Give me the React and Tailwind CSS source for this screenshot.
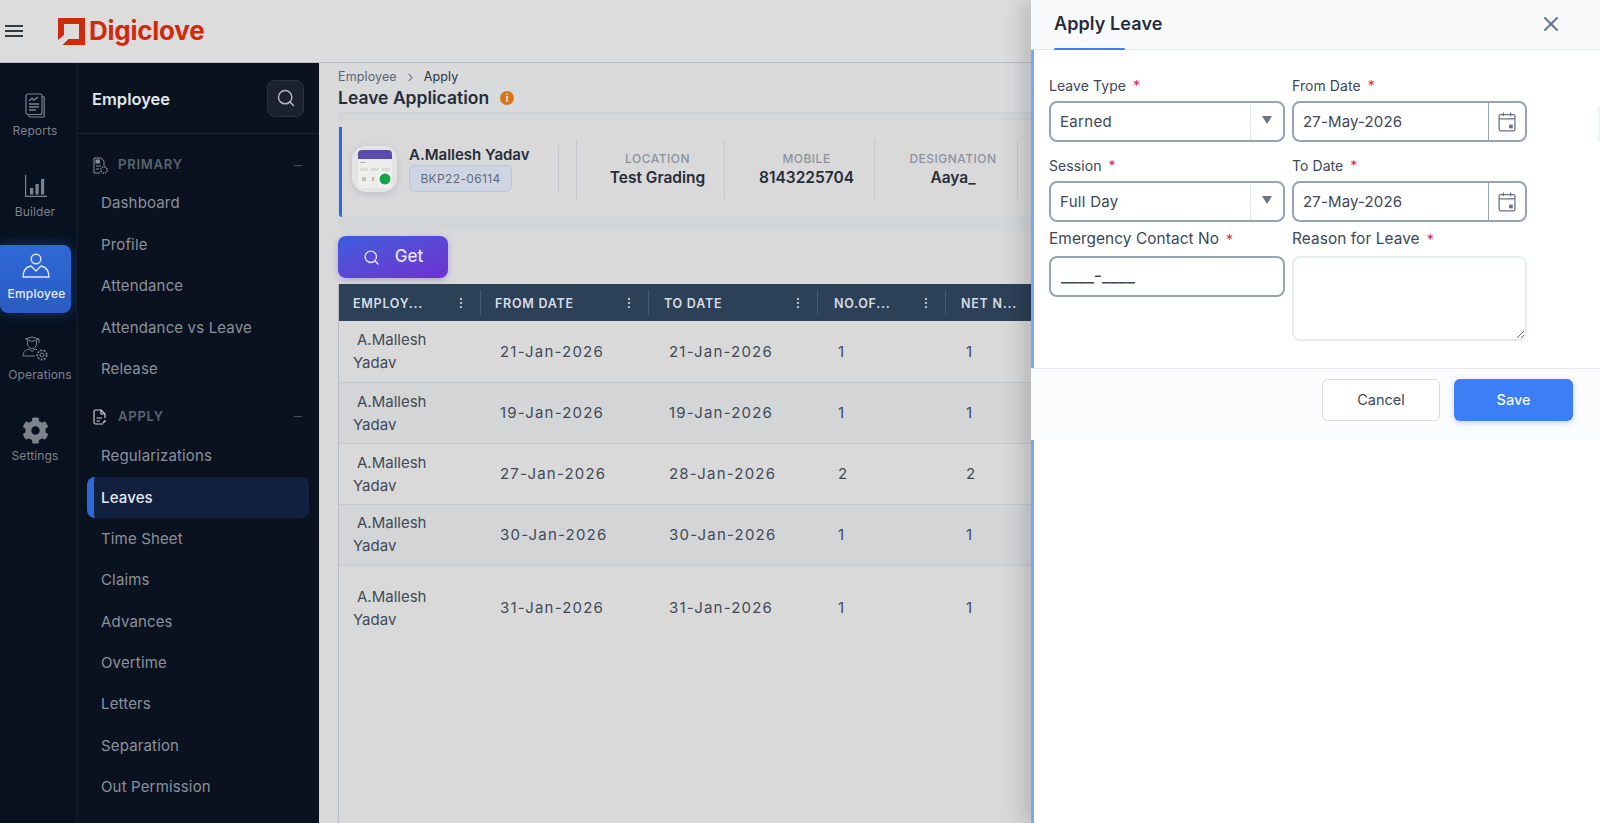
import React from 'react';
import { ChevronRight, EllipsisVertical, Search, X } from 'lucide-react';
import { FaCog } from 'react-icons/fa';

const primaryItems = ['Dashboard', 'Profile', 'Attendance', 'Attendance vs Leave', 'Release'];
const applyItems = ['Regularizations', 'Leaves', 'Time Sheet', 'Claims', 'Advances', 'Overtime', 'Letters', 'Separation', 'Out Permission'];

const columns = [
  { label: 'EMPLOY...', width: 'w-[142px]', pad: 'pl-[14px]' },
  { label: 'FROM DATE', width: 'w-[168px]', pad: 'pl-[14px]' },
  { label: 'TO DATE', width: 'w-[169px]', pad: 'pl-[15px]' },
  { label: 'NO.OF...', width: 'w-[128px]', pad: 'pl-[16px]' },
  { label: 'NET N...', width: 'w-[128px]', pad: 'pl-[15px]' },
];

const rows = [
  { from: '21-Jan-2026', to: '21-Jan-2026', days: 1, net: 1, height: 'h-[61px]', bg: 'bg-[#d9d9d9]', border: 'border-b border-[#c5c9ce]' },
  { from: '19-Jan-2026', to: '19-Jan-2026', days: 1, net: 1, height: 'h-[61px]', bg: 'bg-[#d3d5d7]', border: 'border-b border-[#c5c9ce]' },
  { from: '27-Jan-2026', to: '28-Jan-2026', days: 2, net: 2, height: 'h-[61px]', bg: 'bg-[#d9d9d9]', border: 'border-b border-[#c5c9ce]' },
  { from: '30-Jan-2026', to: '30-Jan-2026', days: 1, net: 1, height: 'h-[61px]', bg: 'bg-[#d3d5d7]', border: 'border-b-2 border-[#cbced2]' },
  { from: '31-Jan-2026', to: '31-Jan-2026', days: 1, net: 1, height: 'h-[84px]', bg: 'bg-[#d9d9d9]', border: '' },
];

function ReportsIcon() {
  return (
    <svg width="20" height="25" viewBox="0 0 20 25" fill="none" stroke="currentColor" strokeWidth="1.2">
      <path d="M17 3.500h1.200a1 1 0 0 1 1 1V23a1 1 0 0 1-1 1H5a1 1 0 0 1-1-1v-1.500" />
      <rect x="1" y="1" width="16" height="20.500" rx="2" />
      <path d="M4 8l3-2.500 2 1.500 4-3" strokeWidth="1.400" />
      <path d="M4 11h10M4 14h10M4 17h7" strokeWidth="1.400" />
    </svg>
  );
}

function BuilderIcon() {
  return (
    <svg width="23" height="23" viewBox="0 0 23 23" fill="currentColor">
      <path d="M1 0h1.200v20.800H23V22H1z" />
      <rect x="6" y="13" width="3.200" height="6.500" />
      <rect x="11.500" y="9" width="3.200" height="10.500" />
      <rect x="17" y="4" width="3.200" height="15.500" />
    </svg>
  );
}

function EmployeeIcon() {
  return (
    <svg width="28" height="25" viewBox="0 0 28 25" fill="none" stroke="currentColor" strokeWidth="1.400">
      <circle cx="14" cy="6" r="4.800" />
      <path d="M1 24c0-7 3-10 8-11l5 5 5-5c5 1 8 4 8 11z" strokeLinejoin="round" />
    </svg>
  );
}

function OperationsIcon() {
  return (
    <svg width="26" height="26" viewBox="0 0 26 26" fill="none" stroke="currentColor" strokeWidth="1">
      <path d="M3.500 3L10 1l7 2-7 2.500z" />
      <path d="M5.500 4.500V8a4.500 4.500 0 0 0 9 0V4.500M17 3v4" />
      <path d="M1 20c0-4 2.500-6 6-7l3 2.500 3-2.500 2 .7M1 20h12" strokeLinejoin="round" />
      <circle cx="20" cy="19" r="2" />
      <circle cx="20" cy="19" r="4.700" strokeWidth="1.700" strokeDasharray="2 1.300" />
    </svg>
  );
}

function PrimaryIcon() {
  return (
    <svg width="15" height="17" viewBox="0 0 15 17" fill="none" stroke="#8a909a" strokeWidth="1">
      <path d="M7 16H1V1h7l3 3v5" />
      <rect x="3" y="3" width="3.500" height="3" fill="#8a909a" />
      <path d="M3 9h5M3 12h3" />
      <circle cx="11" cy="13" r="3.200" strokeWidth="1.400" strokeDasharray="1.500 1" />
    </svg>
  );
}

function ApplyIcon() {
  return (
    <svg width="14" height="16" viewBox="0 0 14 16" fill="none" stroke="#c9ccd2" strokeWidth="1.200">
      <path d="M12 9V5L8 1H2.500A1.500 1.500 0 0 0 1 2.500v11A1.500 1.500 0 0 0 2.500 15H10" strokeLinejoin="round" />
      <path d="M8 1v4h4M3.500 9H9M3.500 12H7" />
      <path d="M10 14l2.500-2.500" strokeWidth="1.600" />
    </svg>
  );
}

function CalendarIcon() {
  return (
    <svg width="18" height="20" viewBox="0 0 17 19" fill="none" stroke="#64748b" strokeWidth="1.200">
      <rect x="1" y="2.500" width="15" height="15.500" rx="1.500" />
      <path d="M1 6.500h15M5 .5v3.500M12 .5v3.500" />
      <rect x="10.500" y="12" width="3.500" height="3.500" fill="#64748b" stroke="none" />
    </svg>
  );
}

function AvatarArt() {
  return (
    <svg width="34" height="38" viewBox="0 0 34 38">
      <rect width="34" height="38" rx="4" fill="#eeeeec" />
      <path d="M0 9V4a4 4 0 0 1 4-4h26a4 4 0 0 1 4 4v5z" fill="#5b4ab0" />
      <rect x="2" y="12" width="6" height="1" fill="#b5b5b5" />
      <rect x="2" y="18" width="8" height="3" fill="#dbdbd6" />
      <rect x="13" y="18" width="8" height="3" fill="#dbdbd6" />
      <rect x="24" y="18" width="8" height="3" fill="#dbdbd6" />
      <rect x="4" y="27" width="4" height="4" fill="#c5c1bb" />
      <rect x="14" y="27" width="2" height="4" fill="#dfa59c" />
      <circle cx="27" cy="29" r="7" fill="#f6f6f6" />
      <circle cx="27" cy="29" r="5.500" fill="#16a34a" />
    </svg>
  );
}

function NavItem({ label, active }) {
  if (active) {
    return (
      <div className="ml-[10px] mr-[10px] flex h-[41px] items-center rounded-lg border-l-[7px] border-[#3069d6] bg-[#12203f] pl-[7px] text-[15px] font-medium tracking-[0.01em] text-[#e8ebf0]">
        {label}
      </div>
    );
  }
  return <div className="flex h-[41.400px] items-center pl-6 text-[15px] tracking-[0.01em] text-[#8b919b]">{label}</div>;
}

function SectionTitle({ icon, label }) {
  return (
    <div className="flex h-[36px] items-center pl-4 pr-[17px]">
      <span className="flex w-[25px]">{icon}</span>
      <span className="text-[13px] font-semibold tracking-[0.06em] text-[#5c636f]">{label}</span>
      <span className="ml-auto h-[1px] w-2 bg-[#4b525e]" />
    </div>
  );
}

function RailItem({ icon, label, active, labelClass = '' }) {
  if (active) {
    return (
      <div className="flex h-[68px] w-[71px] flex-col items-center rounded-r-lg rounded-bl-lg bg-gradient-to-b from-[#2f69d6] to-[#2a5cc4] pt-[8px] text-[#dfe8fa] shadow-[0_0_14px_rgba(47,105,214,0.45)]">
        {icon}
        <span className="ml-[2px] mt-[7px] text-[12px] font-medium tracking-[0.02em] text-[#e6edfb]">{label}</span>
      </div>
    );
  }
  return (
    <div className="flex w-[70px] flex-col items-center text-[#7d838d]">
      <span className="flex h-[30px] items-center">{icon}</span>
      <span className={`mt-[2px] text-[12px] tracking-[0.01em] ${labelClass}`}>{label}</span>
    </div>
  );
}

function StatBlock({ label, value, width }) {
  return (
    <div className={`flex h-[60px] flex-col items-center justify-center border-r border-[#c4c7cb] pl-[14px] pt-[3px] ${width}`}>
      <span className="text-[12px] font-medium tracking-[0.04em] text-[#8c93a0]">{label}</span>
      <span className="-mt-[2px] text-[15.500px] font-semibold text-[#252d3a]">{value}</span>
    </div>
  );
}

function FieldLabel({ text, large }) {
  return (
    <label className={`flex h-[22px] items-center tracking-[0.005em] text-[#3d4756] ${large ? 'text-[15.400px]' : 'text-[14px]'}`}>
      {text}
      <span className="ml-[7px] text-[14px] text-[#e11d48]">*</span>
    </label>
  );
}

function SelectField({ value }) {
  return (
    <div className="flex h-[41px] items-center rounded-lg border-2 border-[#97a3b6] bg-white text-[15px] tracking-[0.02em] text-[#3d4756]">
      <span className="flex-1 pl-[9px] pt-[2px]">{value}</span>
      <span className="flex h-full w-[33px] items-center justify-center border-l border-[#e2e8f0] pb-1">
        <span className="h-0 w-0 border-x-[5px] border-t-[8px] border-x-transparent border-t-[#64748b]" />
      </span>
    </div>
  );
}

function DateField({ value }) {
  return (
    <div className="flex h-[41px] items-center rounded-lg border-2 border-[#97a3b6] bg-white text-[15px] tracking-[0.01em] text-[#3d4756]">
      <span className="flex-1 pl-[9px] pt-[2px]">{value}</span>
      <span className="flex h-full w-[37px] items-center justify-center border-l border-[#97a3b6]">
        <CalendarIcon />
      </span>
    </div>
  );
}

export default function App() {
  return (
    <div className="relative h-[823px] w-[1600px] overflow-hidden bg-[#d9d9d9] font-['Inter',sans-serif]">
      {/* Top bar */}
      <header className="flex h-[63px] items-center border-b border-[#b9bcc0] bg-[#dcdcdc]">
        <div className="ml-[5px] flex w-[18px] flex-col gap-[3px]">
          <span className="h-[2px] bg-[#333a40]" />
          <span className="h-[2px] bg-[#333a40]" />
          <span className="h-[2px] bg-[#333a40]" />
        </div>
        <svg className="ml-[35px]" width="27" height="27" viewBox="0 0 27 27" fill="#cf2a0e">
          <path d="M0 0H27V27H4.500L10.500 21H21V6H6V17L0 22Z" />
        </svg>
        <span className="ml-[4px] text-[26px] font-bold leading-none tracking-[-0.01em] text-[#cf2a0e]">Digiclove</span>
      </header>

      <div className="flex h-[760px]">
        {/* Icon rail */}
        <aside className="flex w-[77px] shrink-0 flex-col border-r border-[#141d2b] bg-[#07111f]">
          <div className="pt-[27px]">
            <RailItem icon={<ReportsIcon />} label="Reports" />
          </div>
          <div className="mt-[31px]">
            <RailItem icon={<BuilderIcon />} label="Builder" />
          </div>
          <div className="mt-[24px]">
            <RailItem active icon={<EmployeeIcon />} label="Employee" />
          </div>
          <div className="mt-[21px]">
            <RailItem icon={<OperationsIcon />} label="Operations" labelClass="translate-x-[5px]" />
          </div>
          <div className="mt-[31px]">
            <RailItem icon={<FaCog size={27} />} label="Settings" />
          </div>
        </aside>

        {/* Section nav */}
        <nav className="w-[242px] shrink-0 bg-[#0a1220]">
          <div className="flex h-[71px] items-center justify-between border-b border-[#1e2633] pl-[15px] pr-[15px]">
            <span className="pt-[2px] text-[16.500px] font-semibold text-[#e2e5ea]">Employee</span>
            <span className="flex h-[37px] w-[37px] items-center justify-center rounded-lg border border-[#2a3341] bg-[#1a2230]">
              <Search size={20} strokeWidth={1.750} className="text-[#b4b8bf]" />
            </span>
          </div>
          <div className="pt-[13px]">
            <SectionTitle icon={<PrimaryIcon />} label="PRIMARY" />
            {primaryItems.map((item) => (
              <NavItem key={item} label={item} />
            ))}
            <div className="mt-[9px]">
              <SectionTitle icon={<ApplyIcon />} label="APPLY" />
            </div>
            <div className="mt-[1px]">
              {applyItems.map((item) => (
                <NavItem key={item} label={item} active={item === 'Leaves'} />
              ))}
            </div>
          </div>
        </nav>

        {/* Page content */}
        <main className="flex min-w-0 flex-1 flex-col pl-[19px]">
          <div className="h-[51px] shrink-0 border-b-2 border-[#cfd2d6] bg-[#d8dadb] pt-[5px]">
            <div className="flex items-center pt-[1px] text-[12.500px] leading-4 tracking-[0.01em] text-[#5e6673]">
              Employee
              <ChevronRight size={13} className="mx-[7px] text-[#7b828e]" />
              <span className="text-[#2d3542]">Apply</span>
            </div>
            <div className="mt-[1px] flex items-center text-[17.500px] font-semibold leading-6 text-[#252d3a]">
              Leave Application
              <span className="ml-[11px] flex h-[14px] w-[14px] items-center justify-center rounded-full bg-[#d97716] text-[10px] font-bold leading-none text-[#e9e5dc]">i</span>
            </div>
          </div>

          {/* Employee summary */}
          <div className="bg-[#d4d6d8] pb-[13px] pt-[5px]">
            <div className="flex h-[99px] items-center rounded-lg border border-[#cfd2d6] bg-[#d9d9d9]">
              <div className="h-[90px] w-[3px] self-end rounded-bl bg-[#2f69d6]" />
              <div className="ml-[10px] flex h-[46px] w-[45px] items-center justify-center rounded-[14px] bg-[#e4e4e4] shadow-[0_2px_6px_rgba(90,90,130,0.2)]">
                <AvatarArt />
              </div>
              <div className="ml-[12px] flex h-[47px] w-[150px] flex-col justify-between border-r border-[#c4c7cb]">
                <span className="text-[15px] font-semibold leading-[20px] text-[#252d3a]">A.Mallesh Yadav</span>
                <span className="flex h-[27px] w-[103px] items-center justify-center rounded-md border border-[#b9c3dc] bg-[#ced4e2] text-[12px] tracking-[0.03em] text-[#5f6b82]">BKP22-06114</span>
              </div>
              <div className="h-[60px] w-[18px] border-r border-[#c4c7cb]" />
              <StatBlock label="LOCATION" value="Test Grading" width="w-[148px]" />
              <StatBlock label="MOBILE" value="8143225704" width="w-[150px]" />
              <StatBlock label="DESIGNATION" value="Aaya_" width="w-[143px]" />
            </div>
          </div>

          <div className="pt-[5px]">
            <button className="flex h-[42px] w-[110px] items-center justify-center gap-[15px] rounded-lg bg-gradient-to-br from-[#3a5cdc] to-[#6d2fd0] text-[17px] font-medium text-[#e4e2f0] shadow-[0_2px_6px_rgba(70,50,180,0.3)]">
              <Search size={17} />
              Get
            </button>
          </div>

          {/* Leave table */}
          <div className="mt-[6px] min-h-0 flex-1 border-l border-[#b6bcc4]">
            <table className="table-fixed border-collapse">
              <thead>
                <tr className="h-[37px] bg-[#2c4058]">
                  {columns.map((col) => (
                    <th key={col.label} className={`${col.width} p-0 text-left`}>
                      <div className={`flex h-[25px] items-center border-r border-[#46586d] pr-[12px] text-[12.500px] font-semibold tracking-[0.06em] text-[#d7dce3] ${col.pad}`}>
                        <span className="flex-1 pt-[3px]">{col.label}</span>
                        <EllipsisVertical size={14} className="text-[#b6bec9]" />
                      </div>
                    </th>
                  ))}
                </tr>
              </thead>
              <tbody>
                {rows.map((row) => (
                  <tr key={row.from} className={`${row.height} ${row.bg} ${row.border} text-[15px] text-[#414a58]`}>
                    <td className="p-0 pl-[14px] leading-[23px]">
                      <div className="pl-1">A.Mallesh</div>
                      <div>Yadav</div>
                    </td>
                    <td className="p-0 pl-[19px] pt-[2px] tracking-[0.08em]">{row.from}</td>
                    <td className="p-0 pl-[20px] pt-[2px] tracking-[0.08em]">{row.to}</td>
                    <td className="p-0 pl-[20px] pt-[2px]">{row.days}</td>
                    <td className="p-0 pl-[20px] pt-[2px]">{row.net}</td>
                  </tr>
                ))}
              </tbody>
            </table>
          </div>
        </main>
      </div>

      {/* Apply leave drawer */}
      <aside className="absolute bottom-0 right-0 top-0 flex w-[569px] flex-col border-l-[3px] border-[#7aa7f5] bg-white shadow-[-10px_0_18px_rgba(0,0,0,0.14)]">
        <div className="relative -ml-[3px] flex h-[50px] shrink-0 items-center justify-between border-b border-[#e4e8ef] bg-[#f8fafc] pb-[2px] pl-[23px] pr-[37px]">
          <span className="text-[18px] font-semibold tracking-[0.005em] text-[#252d3a]">Apply Leave</span>
          <X size={24} strokeWidth={2} className="text-[#64748b]" />
          <span className="absolute bottom-[-1px] left-[23px] h-[2px] w-[71px] rounded bg-[#3b82f6]" />
        </div>

        <div className="h-[318px] shrink-0 pl-[15px] pt-[24px]">
          <div className="grid w-[478px] grid-cols-[236px_235px] gap-x-[7px]">
            <div>
              <FieldLabel text="Leave Type" />
              <div className="mt-[5px]">
                <SelectField value="Earned" />
              </div>
            </div>
            <div>
              <FieldLabel text="From Date" />
              <div className="mt-[5px]">
                <DateField value="27-May-2026" />
              </div>
            </div>
            <div className="mt-[12px]">
              <FieldLabel text="Session" />
              <div className="mt-[5px]">
                <SelectField value="Full Day" />
              </div>
            </div>
            <div className="mt-[12px]">
              <FieldLabel text="To Date" />
              <div className="mt-[5px]">
                <DateField value="27-May-2026" />
              </div>
            </div>
            <div className="mt-[6px]">
              <FieldLabel large text="Emergency Contact No" />
              <div className="mt-[6px] flex h-[41px] items-center rounded-lg border-2 border-[#97a3b6] bg-white pb-[2px] pl-[10px] text-[18px] text-[#3d4756]">
                ____-____
              </div>
            </div>
            <div className="mt-[6px]">
              <FieldLabel large text="Reason for Leave" />
              <textarea className="mt-[6px] block h-[85px] w-[235px] rounded-lg border-2 border-[#e8ecf2] bg-white" />
            </div>
          </div>
        </div>

        <div className="-ml-[3px] flex h-[72px] shrink-0 items-start justify-end gap-[14px] border-t border-[#e4e8ef] bg-[#fbfcfe] pr-[27px] pt-[10px]">
          <button className="h-[42px] w-[118px] rounded-md border border-[#d5dbe4] bg-white text-[14.500px] text-[#3d4756]">Cancel</button>
          <button className="h-[42px] w-[119px] rounded-md bg-[#3b7ef5] text-[14.500px] font-medium text-[#f2f6fe] shadow-[0_2px_6px_rgba(59,126,245,0.3)]">Save</button>
        </div>

        <span className="absolute right-0 top-[106px] h-[36px] w-[2px] bg-[#eef2fb]" />
      </aside>
    </div>
  );
}
